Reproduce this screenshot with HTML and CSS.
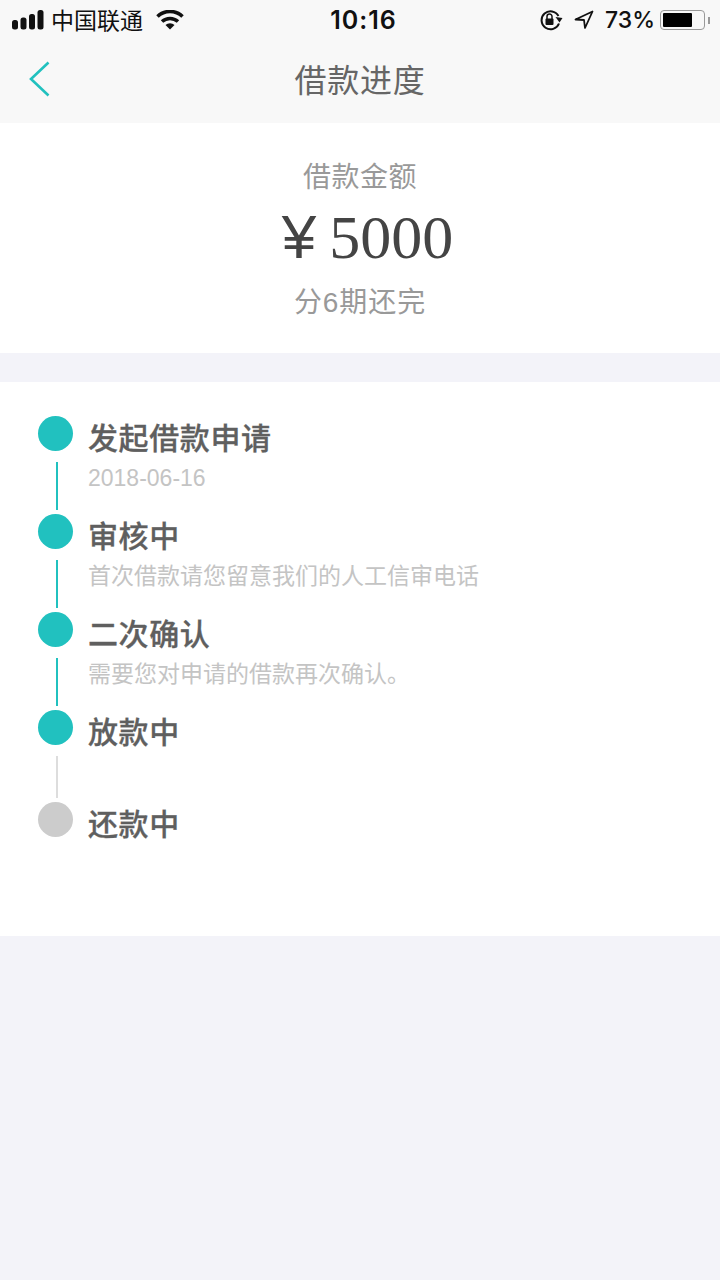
FILE: index.html
```html
<!DOCTYPE html>
<html lang="zh-CN">
<head>
<meta charset="UTF-8">
<meta name="viewport" content="width=device-width, initial-scale=1.0">
<title>借款进度</title>
<link rel="stylesheet" href="styles.css">
</head>
<body>

<div class="top_bar">
  <div class="status_bar">
    <div class="status_left">
      <svg class="signal" width="32" height="20" viewBox="0 0 32 20">
        <rect x="0" y="10" width="6" height="9.500" rx="2.500" fill="#111"/>
        <rect x="8.500" y="7.500" width="6" height="12" rx="2.500" fill="#111"/>
        <rect x="17" y="4" width="6" height="15.500" rx="2.500" fill="#111"/>
        <rect x="25.500" y="0" width="6" height="19.500" rx="2.500" fill="#111"/>
      </svg>
      <span class="carrier">中国联通</span>
      <svg class="wifi" width="28" height="20" viewBox="0 0 28 20">
        <path d="M1.500 6.500 A18 18 0 0 1 26.500 6.500" fill="none" stroke="#111" stroke-width="3.600"/>
        <path d="M6 11.500 A12 12 0 0 1 22 11.500" fill="none" stroke="#111" stroke-width="3.600"/>
        <path d="M9.500 15 A6.500 6.500 0 0 1 18.500 15 L14 19.500 Z" fill="#111"/>
      </svg>
    </div>
    <div class="status_time">10:16</div>
    <div class="status_right">
      <svg width="24" height="22" viewBox="0 0 24 22">
        <path d="M20 14.500 A9 9 0 1 1 19.500 7" fill="none" stroke="#111" stroke-width="2"/>
        <path d="M16.500 8 L23.500 9 L20.500 13.500 Z" fill="#111"/>
        <rect x="6.500" y="9.500" width="8" height="6.500" rx="1" fill="#111"/>
        <path d="M8 10 V7.500 A2.500 2.500 0 0 1 13 7.500 V10" fill="none" stroke="#111" stroke-width="1.500"/>
      </svg>
      <svg class="location" width="20" height="20" viewBox="0 0 20 20">
        <path d="M18.500 1.500 L1.500 9.500 L10 10 L11 18 Z" fill="none" stroke="#111" stroke-width="1.800" stroke-linejoin="round"/>
      </svg>
      <span class="battery_text">73%</span>
      <div class="battery">
        <div class="battery_body"><div class="battery_fill"></div></div>
        <div class="battery_cap"></div>
      </div>
    </div>
  </div>
  <div class="nav_bar">
    <svg class="back" width="22" height="36" viewBox="0 0 22 36">
      <path d="M19.500 1.500 L2 18 L19.500 34.500" fill="none" stroke="#21c1bf" stroke-width="2.600"/>
    </svg>
    <h1>借款进度</h1>
  </div>
</div>

<div class="amount_box">
  <div class="amount_label">借款金额</div>
  <div class="amount_value"><span class="yen">¥</span>5000</div>
  <div class="amount_term">分6期还完</div>
</div>

<div class="progress_box">
  <div class="step">
    <div class="marker"><div class="dot"></div><div class="line"></div></div>
    <div class="step_text">
      <div class="step_title">发起借款申请</div>
      <div class="step_sub">2018-06-16</div>
    </div>
  </div>
  <div class="step">
    <div class="marker"><div class="dot"></div><div class="line"></div></div>
    <div class="step_text">
      <div class="step_title">审核中</div>
      <div class="step_sub">首次借款请您留意我们的人工信审电话</div>
    </div>
  </div>
  <div class="step">
    <div class="marker"><div class="dot"></div><div class="line"></div></div>
    <div class="step_text">
      <div class="step_title">二次确认</div>
      <div class="step_sub">需要您对申请的借款再次确认。</div>
    </div>
  </div>
  <div class="step step_short">
    <div class="marker"><div class="dot"></div><div class="line line_off"></div></div>
    <div class="step_text">
      <div class="step_title">放款中</div>
    </div>
  </div>
  <div class="step step_last">
    <div class="marker"><div class="dot dot_off"></div></div>
    <div class="step_text">
      <div class="step_title">还款中</div>
    </div>
  </div>
</div>

</body>
</html>
```

FILE: styles.css
```css
body {
  margin: 0;
  background-color: #f3f3f9;
  font-family: "Liberation Sans", "Noto Sans CJK SC", sans-serif;
}

.top_bar {
  background-color: #f8f8f8;
  height: 123px;
}
.status_bar {
  height: 40px;
  display: flex;
  align-items: center;
  justify-content: space-between;
  padding: 0 10px 0 12px;
  position: relative;
  color: #111;
}
.status_left {
  display: flex;
  align-items: center;
}
.carrier {
  font-size: 23px;
  margin-left: 7px;
  margin-bottom: 2px;
}
.wifi {
  margin-left: 13px;
}
.status_time {
  position: absolute;
  left: 7px;
  right: 0;
  text-align: center;
  font-family: Inter, "Liberation Sans", sans-serif;
  font-size: 25px;
  font-weight: 600;
  letter-spacing: 1px;
}
.status_right {
  display: flex;
  align-items: center;
}
.location {
  margin-left: 11px;
}
.battery_text {
  font-family: Inter, "Liberation Sans", sans-serif;
  font-size: 23px;
  font-weight: 500;
  margin-left: 11px;
}
.battery {
  display: flex;
  align-items: center;
  margin-left: 5px;
}
.battery_body {
  width: 39px;
  height: 14px;
  border: 1.500px solid #999;
  border-radius: 4px;
  padding: 2px;
}
.battery_fill {
  width: 29px;
  height: 100%;
  background-color: #000;
  border-radius: 1px;
}
.battery_cap {
  width: 2px;
  height: 7px;
  margin-left: 3px;
  background-color: #999;
}

.nav_bar {
  height: 83px;
  box-sizing: border-box;
  padding-bottom: 8px;
  display: flex;
  align-items: center;
  justify-content: center;
  position: relative;
}
.nav_bar h1 {
  margin: 0;
  font-size: 32px;
  font-weight: normal;
  letter-spacing: 0.7px;
  color: #666;
}
.back {
  position: absolute;
  left: 29px;
  top: 21px;
}

.amount_box {
  background-color: #fff;
  height: 230px;
  box-sizing: border-box;
  padding-top: 37px;
  margin-bottom: 29px;
  text-align: center;
}
.amount_label {
  font-size: 28px;
  letter-spacing: 0.5px;
  line-height: 36px;
  color: #999;
}
.amount_value {
  font-family: "Liberation Serif", serif;
  font-size: 62px;
  line-height: 68px;
  margin-top: 7px;
  padding-left: 15px;
  color: #444;
}
.yen {
  font-family: "Liberation Sans", sans-serif;
  line-height: 1;
  margin-right: 13px;
}
.amount_term {
  font-size: 28px;
  letter-spacing: 0.9px;
  line-height: 36px;
  margin-top: 14px;
  color: #999;
}

.progress_box {
  background-color: #fff;
  height: 554px;
  box-sizing: border-box;
  padding: 34px 0 0 38px;
}
.step {
  display: flex;
  height: 98px;
}
.step_short {
  height: 92px;
}
.step_last {
  height: auto;
}
.marker {
  width: 35px;
  display: flex;
  flex-direction: column;
}
.dot {
  width: 35px;
  height: 35px;
  border-radius: 50%;
  background-color: #21c1bf;
}
.dot_off {
  background-color: #ccc;
}
.line {
  width: 2px;
  flex: 1;
  margin: 11px 0 4px 18px;
  background-color: #21c1bf;
}
.line_off {
  background-color: #ddd;
}
.step_text {
  margin-left: 15px;
  padding-top: 1px;
}
.step_title {
  font-size: 30px;
  font-weight: 500;
  -webkit-text-stroke: 0.3px #5f5f5f;
  letter-spacing: 0.6px;
  line-height: 44px;
  color: #5f5f5f;
}
.step_sub {
  font-size: 23px;
  line-height: 34px;
  color: #c4c4c4;
}
```
